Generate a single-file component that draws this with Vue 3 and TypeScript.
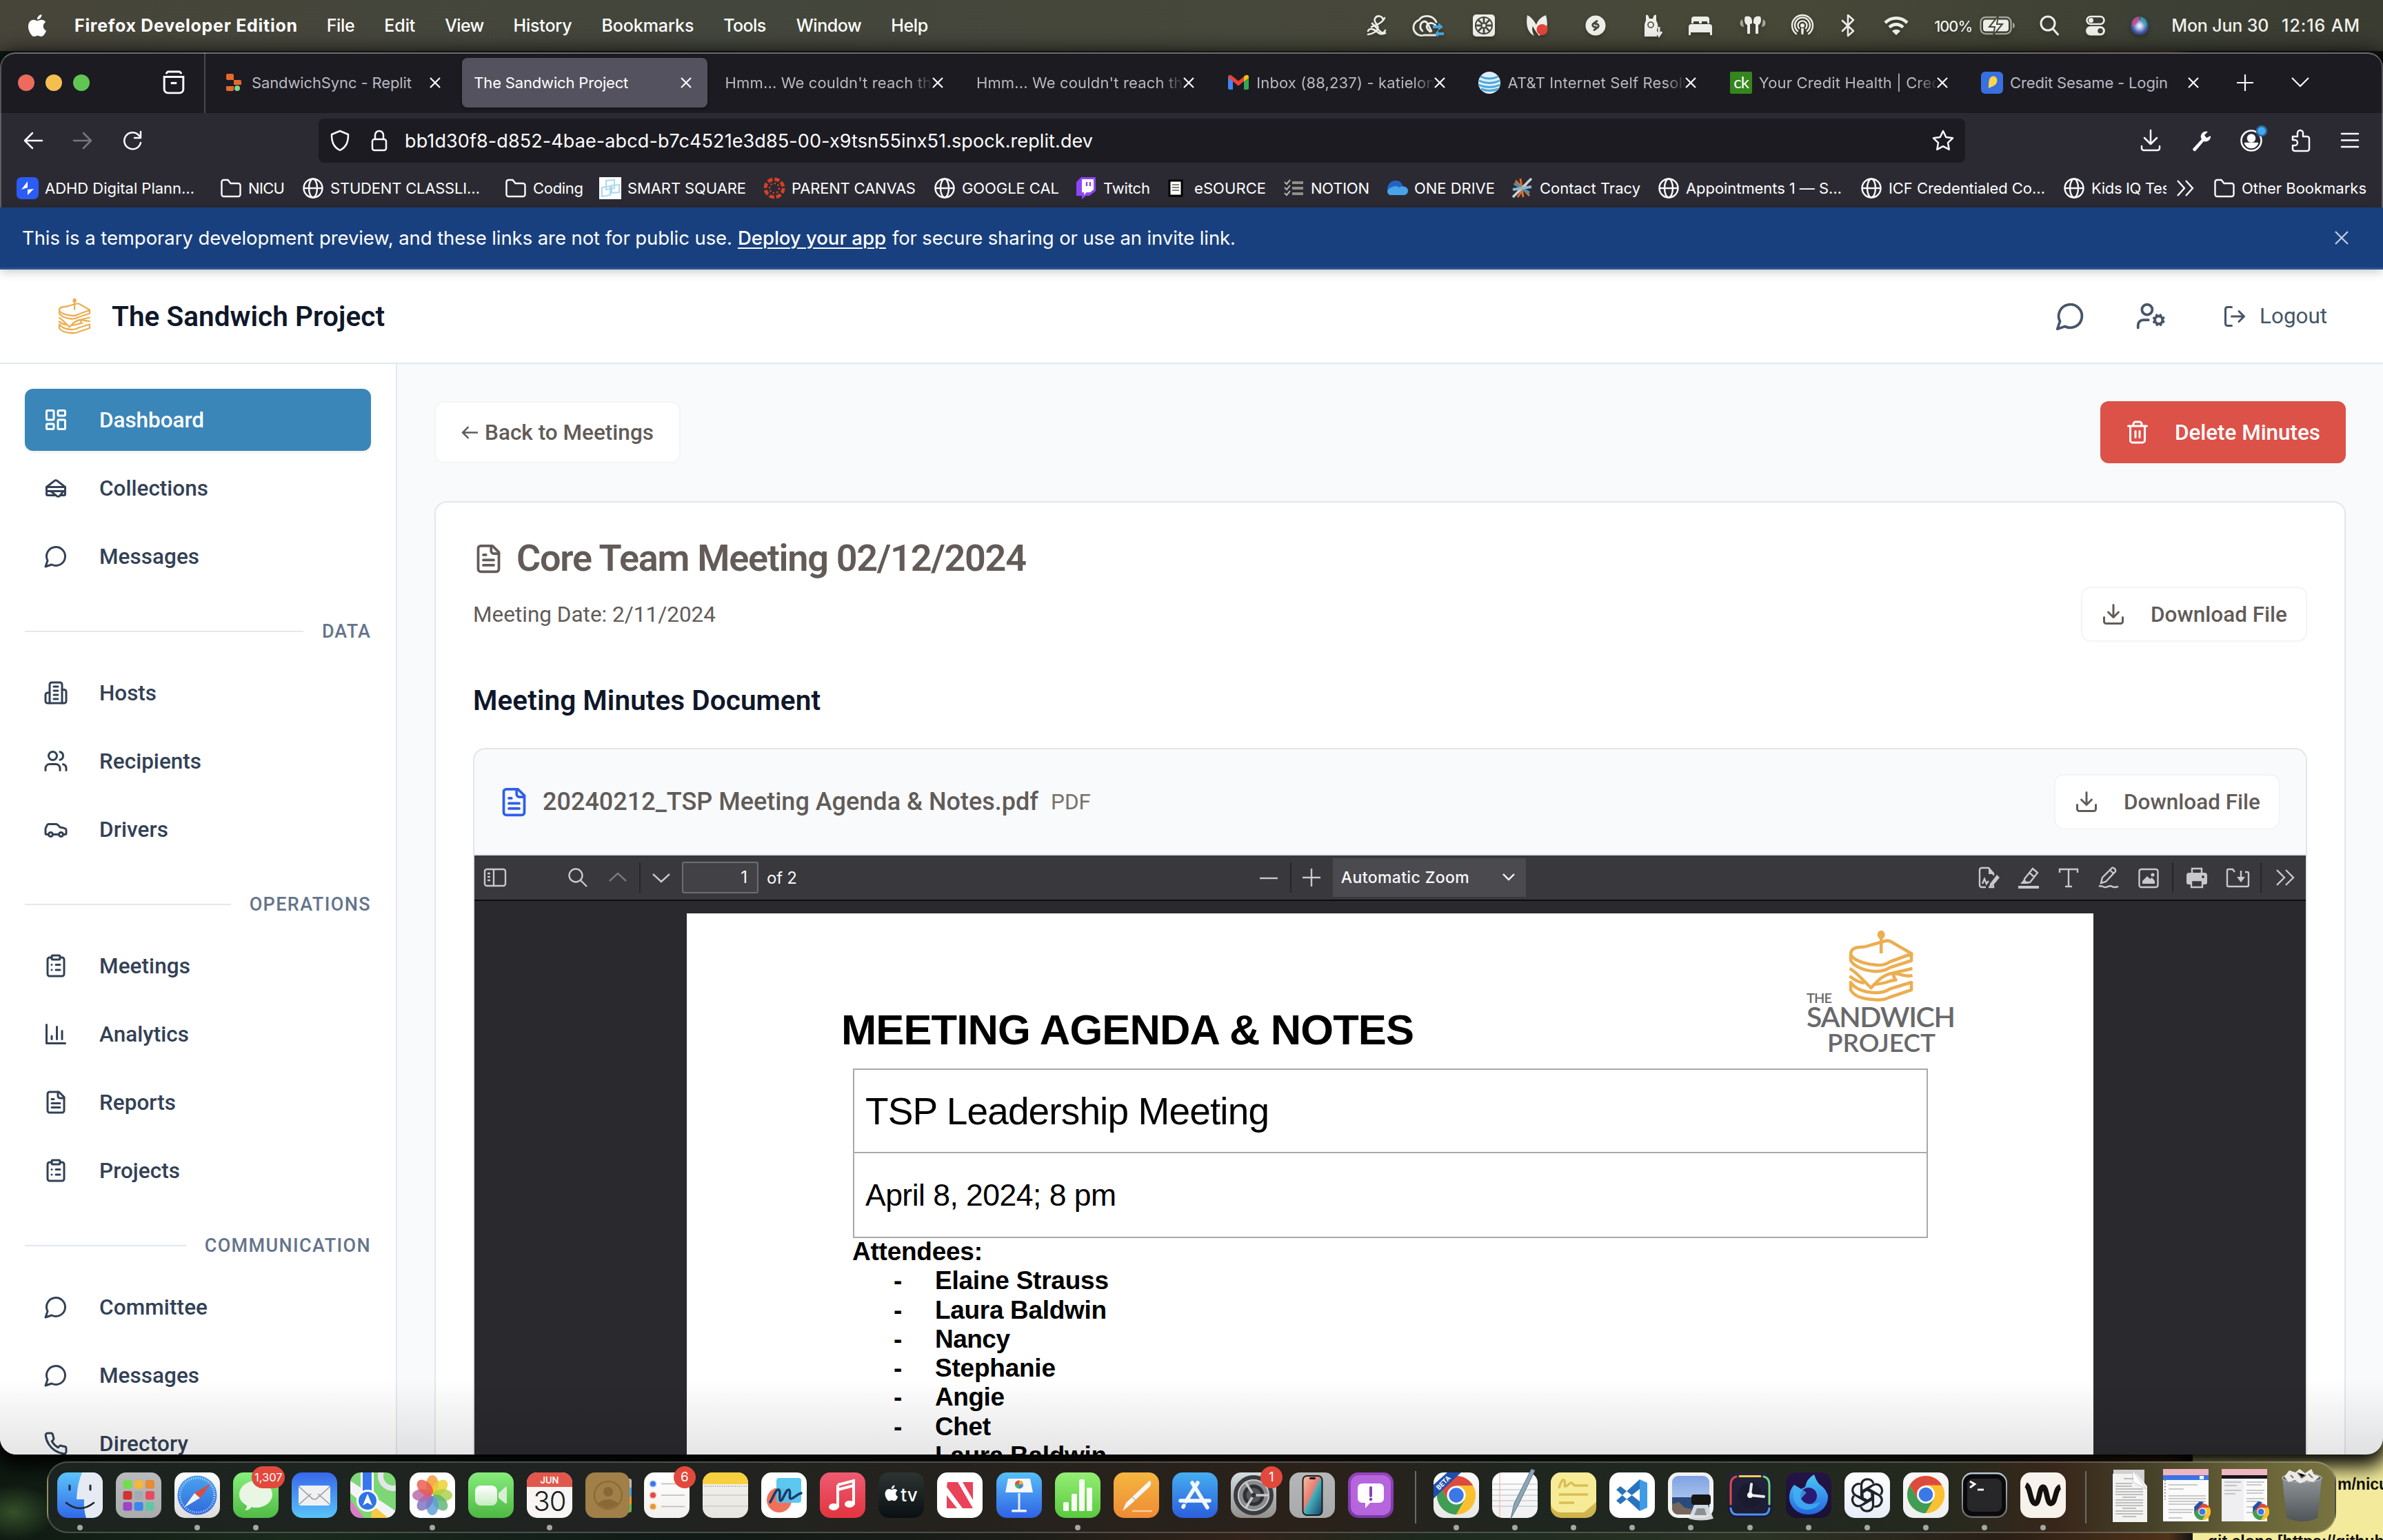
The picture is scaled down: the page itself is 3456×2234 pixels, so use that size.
<script setup lang="ts">
import type { DirectiveBinding } from 'vue'

/* Tracks a label out (or in) so that it fills the given width. */
const vFit = {
  mounted(el: HTMLElement, binding: DirectiveBinding<number | undefined>) {
    const length = (el.textContent ?? '').trim().length
    if (!binding.value || length < 2) return
    const natural = el.getBoundingClientRect().width
    el.style.letterSpacing = `${(binding.value - natural) / (length - 1)}px`
  },
}

/* Stroke icons on a 24 grid */
const line: Record<string, string> = {
  dashboard: '<rect x="3" y="3" width="7" height="9" rx="1"/><rect x="14" y="3" width="7" height="5" rx="1"/><rect x="14" y="12" width="7" height="9" rx="1"/><rect x="3" y="16" width="7" height="5" rx="1"/>',
  sandwich: '<path d="M3 11v3a1 1 0 0 0 1 1h16a1 1 0 0 0 1-1v-3"/><path d="M12 19H4a1 1 0 0 1-1-1v-2a1 1 0 0 1 1-1h16a1 1 0 0 1 1 1v2a1 1 0 0 1-1 1h-3.83"/><path d="m3 11 7.77-6.04a2 2 0 0 1 2.46 0L21 11H3Z"/><path d="M12.97 19.77 7 15h12.5l-3.75 4.5a2 2 0 0 1-2.78.27Z"/>',
  message: '<path d="M7.9 20A9 9 0 1 0 4 16.1L2 22Z"/>',
  building: '<path d="M6 22V4a2 2 0 0 1 2-2h8a2 2 0 0 1 2 2v18Z"/><path d="M6 12H4a2 2 0 0 0-2 2v6a2 2 0 0 0 2 2h2M18 9h2a2 2 0 0 1 2 2v9a2 2 0 0 1-2 2h-2M10 6h4M10 10h4M10 14h4M10 18h4"/>',
  users: '<path d="M16 21v-2a4 4 0 0 0-4-4H6a4 4 0 0 0-4 4v2"/><circle cx="9" cy="7" r="4"/><path d="M22 21v-2a4 4 0 0 0-3-3.87M16 3.13a4 4 0 0 1 0 7.75"/>',
  car: '<path d="M19 17h2c.6 0 1-.4 1-1v-3c0-.9-.7-1.7-1.5-1.9C18.7 10.6 16 10 16 10s-1.3-1.4-2.2-2.3c-.5-.4-1.1-.7-1.8-.7H5c-.6 0-1.1.4-1.4.9l-1.4 2.9A3.7 3.7 0 0 0 2 12v4c0 .6.4 1 1 1h2"/><circle cx="7" cy="17" r="2"/><path d="M9 17h6"/><circle cx="17" cy="17" r="2"/>',
  clipboard: '<rect x="8" y="2" width="8" height="4" rx="1"/><path d="M16 4h2a2 2 0 0 1 2 2v14a2 2 0 0 1-2 2H6a2 2 0 0 1-2-2V6a2 2 0 0 1 2-2h2M12 11h4M12 16h4M8 11h.01M8 16h.01"/>',
  chart: '<path d="M3 3v18h18M18 17V9M13 17V5M8 17v-3"/>',
  file: '<path d="M15 2H6a2 2 0 0 0-2 2v16a2 2 0 0 0 2 2h12a2 2 0 0 0 2-2V7Z"/><path d="M14 2v4a2 2 0 0 0 2 2h4M10 9H8M16 13H8M16 17H8"/>',
  phone: '<path d="M22 16.92v3a2 2 0 0 1-2.18 2 19.79 19.79 0 0 1-8.63-3.07 19.5 19.5 0 0 1-6-6 19.79 19.79 0 0 1-3.07-8.67A2 2 0 0 1 4.11 2h3a2 2 0 0 1 2 1.72 12.84 12.84 0 0 0 .7 2.81 2 2 0 0 1-.45 2.11L8.09 9.91a16 16 0 0 0 6 6l1.27-1.27a2 2 0 0 1 2.11-.45 12.84 12.84 0 0 0 2.81.7A2 2 0 0 1 22 16.92z"/>',
  trash: '<path d="M3 6h18M19 6v14c0 1-1 2-2 2H7c-1 0-2-1-2-2V6M8 6V4c0-1 1-2 2-2h4c1 0 2 1 2 2v2M10 11v6M14 11v6"/>',
  download: '<path d="M21 15v4a2 2 0 0 1-2 2H5a2 2 0 0 1-2-2v-4M7 10l5 5 5-5M12 15V3"/>',
  logout: '<path d="M9 21H5a2 2 0 0 1-2-2V5a2 2 0 0 1 2-2h4M16 17l5-5-5-5M21 12H9"/>',
  userCog: '<circle cx="18" cy="15" r="3"/><circle cx="9" cy="7" r="4"/><path d="M10 15H6a4 4 0 0 0-4 4v2M21.7 16.4l-.9-.3M15.2 13.9l-.9-.3M16.6 18.7l.3-.9M19.1 12.2l.3-.9M19.6 18.7l-.4-1M16.8 12.3l-.4-1M14.3 16.6l1-.4M20.7 13.8l1-.4"/>',
}

const sandwichLogo =
  '<g fill="none" stroke="#ecae52" stroke-width="4.6" stroke-linejoin="round"><path d="M46.7 5v28"/><ellipse cx="46.7" cy="6" rx="3.2" ry="4" fill="#ecae52"/><path d="M2.5 34C3 26 9 24.500 16 24c8 0 11-1 17-3.500l18-5c3-1.200 6-1.200 9 0l31 18-31 11.500c-8 5-14 6-23 4.500C20 48 5 42 2.500 34v9c4 9 20 15 34 16 9 .6 16-1 23-5.500l31-10V33.500"/><path d="M1 55c10 5 17 15 31 28 8-8 15-18 30-21l30-7M1 66c6 5 12 9 21 10M37 78c10-1 16-2 23-5l10-2M64 63l3 9M64 62c10 0 18 6 28 3"/><path d="M2.500 75c6 9 18 14 34 15 9 .6 16-1 23-5.500l31-9.500V86l-31 10.500c-8 4-14 5-23 3.500C20 99 8 96 2.500 86Z"/></g>'

const globe = '<g fill="none" stroke="#fbfbfe" stroke-width="2.400"><circle cx="16" cy="16" r="13.500"/><ellipse cx="16" cy="16" rx="6" ry="13.500"/><path d="M2.500 16h27"/></g>'
const folder = '<path d="M2.500 25V7a3 3 0 0 1 3-3h6l4 5h11a3 3 0 0 1 3 3v13a3 3 0 0 1-3 3h-21a3 3 0 0 1-3-3z" fill="none" stroke="#fbfbfe" stroke-width="2.400"/>'

const applePath = 'M12.152 6.896c-.948 0-2.415-1.078-3.960-1.040-2.040.027-3.910 1.183-4.961 3.014-2.117 3.675-.546 9.103 1.519 12.090 1.013 1.454 2.208 3.090 3.792 3.039 1.520-.065 2.090-.987 3.935-.987 1.831 0 2.350.987 3.960.948 1.637-.026 2.676-1.480 3.676-2.948 1.156-1.688 1.636-3.325 1.662-3.415-.039-.013-3.182-1.221-3.220-4.857-.026-3.040 2.480-4.494 2.597-4.559-1.429-2.090-3.623-2.324-4.390-2.376-2-.156-3.675 1.090-4.610 1.090zM15.530 3.830c.843-1.012 1.400-2.427 1.245-3.830-1.207.052-2.662.805-3.532 1.818-.780.896-1.454 2.338-1.273 3.714 1.338.104 2.715-.688 3.559-1.701'

const menus = [
  { label: 'File', w: 41, gap: 42 }, { label: 'Edit', w: 45, gap: 43 }, { label: 'View', w: 57, gap: 43 },
  { label: 'History', w: 85, gap: 43 }, { label: 'Bookmarks', w: 134, gap: 43 }, { label: 'Tools', w: 62, gap: 43 },
  { label: 'Window', w: 95, gap: 44 }, { label: 'Help', w: 54, gap: 43 },
]

interface Status { w: number; gap: number; svg?: string; text?: string }
const W = 'fill="#eeeee9"'
const S = 'fill="none" stroke="#eeeee9" stroke-linecap="round" stroke-linejoin="round"'
const status: Status[] = [
  { w: 30, gap: 0, svg: `<g ${S} stroke-width="2.600"><path d="M25 9C24 3 16 1 13 7c-3 6 7 9 4 15-2 4-8 7-14 8M8 19c8-3 16-6 19-13M3 25c2-5 9-3 13 1s8 4 12 2M9 14l12 12c3 3 6 1 7-2"/></g>` },
  { w: 44, gap: 41, svg: `<g ${S} stroke-width="2.800"><path d="M30 31H13A11 11 0 0 1 6 9c5-8 20-8 25 3"/><path d="M22 26c-4-3-7-8-3-11 4-3 9-1 11 2M11 25c-5-4-4-13 3-14 5 0 6 8 10 14"/></g><path d="M26 17h8v-4l7 6-7 5v-3h-8zM42 27h-8v-4l-5 6 5 5v-3h8z" fill="#43a5e2"/>` },
  { w: 32, gap: 40, svg: `<rect width="32" height="32" y="1" rx="5" ${W}/><circle cx="16" cy="17" r="12" fill="none" stroke="#45463a" stroke-width="2"/><circle cx="16" cy="17" r="3.500" fill="none" stroke="#45463a" stroke-width="2"/><path d="M16 5v8M16 21v8M4 17h8M20 17h8M7.500 8.500l6 6M18.500 19.500l6 6M24.500 8.500l-6 6M13.500 19.500l-6 6" stroke="#45463a" stroke-width="2.800"/>` },
  { w: 34, gap: 44, svg: `<path d="M3 2c6 3 10 8 13 14C18 10 22 5 30 2c2 8 3 16-1 24-3 4-7 4-9 6-6-8-7-10-9-14-2 5 0 10 2 14C2 26 1 14 3 2z" ${W}/><circle cx="24.500" cy="23" r="8" fill="#e0443a"/>` },
  { w: 30, gap: 53, svg: `<circle cx="15" cy="17" r="14.500" ${W}/><path d="M17 10.500l-5 3.500c-3 3 0 6 3 5M13 23.500l5-3.500c3-3 0-6-3-5" fill="none" stroke="#45463a" stroke-width="2.800" stroke-linecap="round"/>` },
  { w: 30, gap: 53, svg: `<path d="M3 33V17c0-3 1-5 2-7L5 2c3-2 4 2 5 5h5c1-3 2-7 5-5v8c3 5 3 9 1 13v10z" ${W}/><circle cx="12" cy="16" r="4" fill="none" stroke="#45463a" stroke-width="1.600"/><path d="M24 19v10M20 26l4 6 4-6" stroke="#eeeee9" stroke-width="3" fill="none"/>` },
  { w: 36, gap: 36, svg: `<path d="M5 14V8a4 4 0 0 1 4-4h18a4 4 0 0 1 4 4v6h-3v-3H20v3h-4v-3H8v3zM1 31V19a4 4 0 0 1 4-4h26a4 4 0 0 1 4 4v12h-3v-4H4v4z" ${W}/>` },
  { w: 40, gap: 38, svg: `<path d="M9 4c6-2 10 1 10 7v3l-3 1v14h-4V16C8 15 7 8 9 4zM31 4c-6-2-10 1-10 7v3l3 1v14h4V16c4-1 5-8 3-12z" ${W}/><path d="M5 8c-5 2-5 11 2 11zM35 8c5 2 5 11-2 11z" fill="#a5a59c"/>` },
  { w: 32, gap: 36, svg: `<g ${S} stroke-width="2.400"><path d="M7 29A15 15 0 1 1 25 29M9 25a11 11 0 1 1 14 0M11 21a6.500 6.500 0 1 1 10 0"/></g><circle cx="16" cy="17" r="3" ${W}/><path d="M14 21h4l-.6 9h-2.800z" ${W}/>` },
  { w: 24, gap: 38, svg: `<path d="M4 10l16 15-8 7V2l8 7L4 25" ${S} stroke-width="2.600"/>` },
  { w: 36, gap: 40, svg: `<g fill="none" stroke="#eeeee9" stroke-width="4.600"><path d="M2 13c9-9 23-9 32 0M8 19.500c6-5.500 14-5.500 20 0"/></g><path d="M12 25c3-3 9-3 12 0l-6 6z" ${W}/>` },
  { w: 56, gap: 37, text: '100%' },
  { w: 52, gap: 10, svg: `<rect x="1.500" y="5" width="44" height="24" rx="7" fill="none" stroke="#a3a399" stroke-width="2.400"/><rect x="5" y="8.500" width="37" height="17" rx="4" ${W}/><path d="M48 13c4 1 4 7 0 8z" fill="#a3a399"/><path d="M27 3L14 19h8l-2 12 13-16h-8z" ${W} stroke="#45463a" stroke-width="2"/>` },
  { w: 28, gap: 35, svg: `<g ${S} stroke-width="3"><circle cx="12" cy="14" r="10"/><path d="M19.500 22l7 8"/></g>` },
  { w: 28, gap: 39, svg: `<rect x="1.500" y="4" width="25" height="11" rx="5.500" fill="none" stroke="#eeeee9" stroke-width="2.600"/><circle cx="7.500" cy="9.500" r="3.500" ${W}/><rect y="18" width="28" height="13.500" rx="6.700" ${W}/><circle cx="21" cy="24.700" r="3.800" fill="#3f4136"/>` },
  { w: 28, gap: 36, svg: `<defs><radialGradient id="siri"><stop offset="0" stop-color="#fff"/><stop offset=".35" stop-color="#a9b9e8"/><stop offset=".7" stop-color="#4a5fb0"/><stop offset="1" stop-color="#2b3d52"/></radialGradient></defs><circle cx="14" cy="17.500" r="14" fill="url(#siri)"/><path d="M3 12a12 12 0 0 1 11-8c-1 8-5 12-11 15z" fill="#d84c7d" opacity=".8"/><path d="M15 4c8 2 11 8 9 15-4-2-8-7-9-15z" fill="#35b79a" opacity=".7"/>` },
]

interface Tab { title: string; icon?: string; w?: number; active?: boolean; faded?: boolean }
const tabs: Tab[] = [
  { title: 'SandwichSync - Replit', w: 235, icon: '<path d="M5 5a2 2 0 0 1 2-2h7a2 2 0 0 1 2 2v7H7a2 2 0 0 1-2-2zM16 12h9a2 2 0 0 1 2 2v5h-11zM5 21h11v5a2 2 0 0 1-2 2H7a2 2 0 0 1-2-2z" fill="#e8692b"/><circle cx="21" cy="24" r="4" fill="#7fd68c"/>' },
  { title: 'The Sandwich Project', w: 227, active: true },
  { title: "Hmm... We couldn't reach that site", faded: true },
  { title: "Hmm... We couldn't reach that site", faded: true },
  { title: 'Inbox (88,237) - katielong', faded: true, icon: '<path d="M1 7v17a2 2 0 0 0 2 2h5V13z" fill="#4285f4"/><path d="M31 7v17a2 2 0 0 1-2 2h-5V13z" fill="#34a853"/><path d="M1 8c0-3 3-4 5-2.500L16 13.500l10-8C28 4 31 5 31 8l-7 6-8 6.500L8 14z" fill="#ea4335"/><path d="M24 14V7l2-1.500C28 4 31 5 31 8v1z" fill="#fbbc04"/>' },
  { title: 'AT&T Internet Self Resolution', faded: true, icon: '<circle cx="16" cy="16" r="16" fill="#dceef8"/><path d="M3 7q13 6 26 0M1 13q15 7 30 0M0 19q16 7 32 0M4 25q12 5 25 0" stroke="#4ba6d8" stroke-width="3" fill="none"/>' },
  { title: 'Your Credit Health | Credit Karma', faded: true, icon: '<rect width="32" height="32" rx="2" fill="#34861d"/><text x="16" y="24" font-size="24" text-anchor="middle" fill="#fff" font-family="Lato" letter-spacing="-1">ck</text>' },
  { title: 'Credit Sesame - Login', w: 232, icon: '<rect width="32" height="32" rx="6" fill="#3a6fe0"/><path d="M14 8c5-4 11 0 9 7-1 5-6 6-12 9 0-6 0-13 3-16z" fill="#fbd64a"/>' },
]

const bookmarks = [
  { w: 295, t: 'ADHD Digital Plann…', tw: 217, icon: '<rect width="32" height="32" rx="7" fill="#2b5cf6"/><path d="M16 6v12l9-1-9 9V15l-9 3z" fill="#fff"/>' },
  { w: 119, t: 'NICU', tw: 53, icon: folder },
  { w: 294, t: 'STUDENT CLASSLI…', tw: 217, icon: globe },
  { w: 137, t: 'Coding', tw: 73, icon: folder },
  { w: 238, t: 'SMART SQUARE', tw: 172, icon: '<rect width="32" height="32" fill="#fff"/><g fill="none" stroke="#a9d9f2" stroke-width="2"><path d="M10 5l12-1v12l-12 2zM4 15l12-2v13L4 28zM18 12l11-1v11l-11 1z"/></g>' },
  { w: 247, t: 'PARENT CANVAS', tw: 180, icon: '<g fill="none" stroke="#d64027"><circle cx="16" cy="16" r="13" stroke-width="5" stroke-dasharray="7.200 3"/><circle cx="16" cy="16" r="7" stroke-width="2.400" stroke-dasharray="2.400 3"/></g>' },
  { w: 205, t: 'GOOGLE CAL', tw: 141, icon: globe },
  { w: 132, t: 'Twitch', tw: 68, icon: '<path d="M9 0h21v20l-9 7h-5l-6 5v-5H2V7z" fill="#8d45f7"/><path d="M10 3h17v15l-5 4h-5l-4 4v-4h-3z" fill="#fff"/><path d="M17 7v6M22 7v6" stroke="#8d45f7" stroke-width="2.400"/>' },
  { w: 169, t: 'eSOURCE', tw: 104, icon: '<rect x="5" y="5" width="18" height="22" fill="#fff" stroke="#000" stroke-width="3"/><path d="M9 11h10M9 15h10M9 19h10" stroke="#555" stroke-width="1.600"/>' },
  { w: 150, t: 'NOTION', tw: 85, icon: '<path d="M14 8h16M14 16h16M14 24h16" stroke="#8f8f88" stroke-width="4"/><path d="M3 7l3 3 5-6M3 15l3 3 5-6M3 23l3 3 5-6" stroke="#b5b5ab" stroke-width="2" fill="none"/>' },
  { w: 182, t: 'ONE DRIVE', tw: 117, icon: '<path d="M2 18C2 10 8 4 15 5c6 0 9 5 9 8 5 0 8 3 8 7 0 3-3 6-6 6H8c-4 0-6-4-6-8z" fill="#2463c4"/><path d="M10 14c3-2 7-1 9 1 5-3 13-1 13 5 0 3-3 6-6 6H7c-3 0-5-3-5-5 1-4 4-6 8-7z" fill="#49a3e8"/>' },
  { w: 212, t: 'Contact Tracy', tw: 146, icon: '<path d="M13 2l4 27M25 5L9 29M6 5l20 22" stroke="#d9702f" stroke-width="3"/><path d="M2 29L29 2" stroke="#c9d3db" stroke-width="3.500"/><path d="M4 9l22 14" stroke="#4f8fae" stroke-width="4"/><path d="M2 18l27-4" stroke="#8fb4c6" stroke-width="4"/>' },
  { w: 294, t: 'Appointments 1 — S…', tw: 226, icon: globe },
  { w: 294, t: 'ICF Credentialed Co…', tw: 227, icon: globe },
  { w: 150, t: 'Kids IQ Test', tw: 121, icon: globe },
]

interface NavItem { label: string; icon: string; w: number; active?: boolean }
interface NavGroup { heading?: string; w?: number; items: NavItem[] }
const nav: NavGroup[] = [
  { items: [
    { label: 'Dashboard', icon: 'dashboard', w: 152, active: true },
    { label: 'Collections', icon: 'sandwich', w: 158 },
    { label: 'Messages', icon: 'message', w: 145 },
  ] },
  { heading: 'DATA', w: 70, items: [
    { label: 'Hosts', icon: 'building', w: 83 },
    { label: 'Recipients', icon: 'users', w: 148 },
    { label: 'Drivers', icon: 'car', w: 100 },
  ] },
  { heading: 'OPERATIONS', w: 175, items: [
    { label: 'Meetings', icon: 'clipboard', w: 132 },
    { label: 'Analytics', icon: 'chart', w: 130 },
    { label: 'Reports', icon: 'file', w: 111 },
    { label: 'Projects', icon: 'clipboard', w: 117 },
  ] },
  { heading: 'COMMUNICATION', w: 240, items: [
    { label: 'Committee', icon: 'message', w: 157 },
    { label: 'Messages', icon: 'message', w: 145 },
    { label: 'Directory', icon: 'phone', w: 129 },
  ] },
]

/* PDF toolbar: cell width, glyph (null draws a separator) */
const pdfTools: { w: number; svg: string | null }[] = [
  { w: 58, svg: '<path d="M12 30H6a3 3 0 0 1-3-3V5a3 3 0 0 1 3-3h10l7 8v3M16 30h7v-3" class="s"/><path d="M16 2l8 9h-8zM18 25l10-13 4 4-10 12-5 2z" class="f"/><path d="M7 25l3-7 3 7 3-4" class="s"/>' },
  { w: 58, svg: '<path d="M10 18L22 3l7 6-11 14H11zM17 9l7 6" class="s"/><path d="M9 19l7 6H4zM1 28h30v4H1z" class="f"/>' },
  { w: 58, svg: '<path d="M3 9V4h26v5M16 4v25M11 29h10" class="s"/>' },
  { w: 58, svg: '<path d="M5 24l2-8L21 2c2-1 6 2 5 5L12 22zM18 5l5 5M2 29c4-3 6 2 10 1s6-3 9-1 6 1 9 0" class="s"/>' },
  { w: 58, svg: '<rect x="2.500" y="4" width="27" height="26" rx="3" class="s"/><path d="M7 25v-4l7-7 4 4 3-2 4 5v4z" class="f"/><circle cx="22" cy="12" r="2.600" class="f"/>' },
  { w: 12, svg: null },
  { w: 58, svg: '<path d="M9 11V3h14v8" class="s"/><path d="M5 9h22a4 4 0 0 1 4 4v10a3 3 0 0 1-3 3h-3v-5H7v5H4a3 3 0 0 1-3-3V13a4 4 0 0 1 4-4z" class="f"/><path d="M8 20h16v10H8z" class="s"/><circle cx="25" cy="15" r="2" fill="#38383d"/>' },
  { w: 59, svg: '<path d="M12 8L9 4H3a2 2 0 0 0-2 2v21a2 2 0 0 0 2 2h27a2 2 0 0 0 2-2V10a2 2 0 0 0-2-2h-3M21 6v12" class="s"/><path d="M15 15h12l-6 8z" class="f"/>' },
  { w: 10, svg: null },
  { w: 60, svg: '<path d="M4 5l11 11L4 27M17 5l11 11-11 11" class="s"/>' },
]

const attendees = [
  { n: 'Elaine Strauss', w: 252 }, { n: 'Laura Baldwin', w: 249 }, { n: 'Nancy', w: 109 }, { n: 'Stephanie', w: 175 },
  { n: 'Angie', w: 101 }, { n: 'Chet', w: 81 }, { n: 'Laura Baldwin', w: 249 },
]

const grad = (id: string, a: string, b: string) =>
  `<defs><linearGradient id="${id}" x2="0" y2="1"><stop stop-color="${a}"/><stop offset="1" stop-color="${b}"/></linearGradient></defs>`
const tile = (id: string, a: string, b: string = a) => `${grad(id, a, b)}<rect width="66" height="66" rx="15" fill="url(#${id})"/>`
const chrome = (cx: number, cy: number, r: number) =>
  `<g transform="translate(${cx} ${cy}) scale(${r / 30})"><circle r="30" fill="#fbc02f"/><path d="M-26-15A30 30 0 0 1 26-15H0L-13 7.500z" fill="#dd4b3e"/><path d="M-26-15A30 30 0 0 0 0 30L13 7.500-13 7.500z" fill="#3f9d55"/><path d="M0 30L13 7.500V-4L26-15A30 30 0 0 1 0 30z" fill="#fbc02f"/><circle r="14.500" fill="#fff"/><circle r="11.500" fill="#3b78e7"/></g>`
const petals = ['#f39a2d', '#e9d22c', '#a9cf45', '#5fb574', '#5b9fd8', '#7c6fc0', '#b765a9', '#ea5a4b']

interface DockItem { svg: string; gap?: number; w?: number; dot?: boolean; badge?: string; sep?: boolean }
const dock: DockItem[] = [
  { dot: true, svg: `${tile('d1', '#5cc4fb', '#3168e8')}<path d="M36 0h15a15 15 0 0 1 15 15v36a15 15 0 0 1-15 15h-9q-4-12-3-27H28Q29 16 36 0z" fill="#e6ebf3"/><path d="M18 19v6M48 19v6" stroke="#1d2b3d" stroke-width="3" stroke-linecap="round"/><path d="M13 44q20 16 40 0" fill="none" stroke="#1c2733" stroke-width="2.600" stroke-linecap="round"/>` },
  { svg: `${tile('d2', '#b9bbbc', '#a9abac')}${['#73dd4d', '#f2b73b', '#e88b31', '#cf3430', '#a4abb0', '#e84a5e', '#9b45c9', '#3b86ef', '#5fc8a4'].map((c, i) => `<rect x="${10.500 + (i % 3) * 16.200}" y="${11 + Math.floor(i / 3) * 16}" width="13" height="12.500" rx="3" fill="${c}"/>`).join('')}` },
  { dot: true, svg: `${tile('d3', '#ffffff', '#dcdcdc')}${grad('d3b', '#4aa5ee', '#2f68dc')}<circle cx="33" cy="33" r="28.500" fill="url(#d3b)"/><circle cx="33" cy="33" r="25" fill="none" stroke="#cfe4fa" stroke-width="3" stroke-dasharray="1 2.270"/><path d="M53 16L29 30l8 7z" fill="#e04a3d"/><path d="M14 51l15-21 8 7z" fill="#f2f2f2"/>` },
  { dot: true, badge: '1,307', svg: `${tile('d4', '#87f07c', '#4fbb45')}<path d="M33 12c13 0 24 9 24 20S46 51 33 51c-2 0-4 0-6-1-2 3-6 5-10 5 2-2 3-4 3-7-7-4-11-9-11-16 0-11 11-20 24-20z" fill="#e8f6e3"/>` },
  { svg: `${tile('d5', '#3768ea', '#59c4fa')}<rect x="10" y="19" width="46" height="29" rx="4" fill="#f0f1f3"/><path d="M11 46l17-15M55 46L38 31M11 21l19 17q3 2 6 0l19-17" fill="none" stroke="#9a9ca0" stroke-width="1.600"/>` },
  { svg: `<defs><clipPath id="mp"><rect width="66" height="66" rx="15"/></clipPath></defs><g clip-path="url(#mp)"><rect width="66" height="66" fill="#7ed775"/><path d="M0 12l66 44v10H44L0 30z" fill="#f3f4f8"/><path d="M0 40l20 26H0z" fill="#dc7cc4"/><path d="M33 48l22 18H30z" fill="#f6c944"/><circle cx="62" cy="5" r="18" fill="none" stroke="#e4e5ea" stroke-width="8"/><rect x="15" width="19" height="40" fill="#fff"/><rect x="18" width="13" height="40" fill="#3a76ee"/></g><circle cx="25" cy="41" r="16" fill="#fff"/><circle cx="25" cy="41" r="13" fill="#2f73e6"/><path d="M25 31l7 17-7-4-7 4z" fill="#fff"/>` },
  { dot: true, svg: `${tile('d7', '#ffffff')}${petals.map((c, i) => `<ellipse cx="33" cy="18" rx="9" ry="14" fill="${c}" opacity=".82" transform="rotate(${i * 45} 33 33)"/>`).join('')}` },
  { svg: `${tile('d8', '#86ec7b', '#4db843')}${grad('d8b', '#ffffff', '#c8ecc2')}<rect x="10" y="19" width="32" height="29" rx="8" fill="url(#d8b)"/><path d="M44 30l10-9q2-1 2 1v22q0 2-2 1l-10-8z" fill="#d6efd2"/>` },
  { dot: true, svg: `<defs><clipPath id="cal"><rect width="66" height="66" rx="15"/></clipPath></defs><g clip-path="url(#cal)"><rect width="66" height="66" fill="#f7f6f5"/><rect width="66" height="21" fill="#e2574c"/></g><text x="33" y="16" text-anchor="middle" font-family="Inter" font-weight="600" font-size="13" fill="#fff">JUN</text><text x="33" y="56" text-anchor="middle" font-family="Inter" font-weight="300" font-size="40" letter-spacing="-1" fill="#1c1c1c">30</text>` },
  { svg: `<path d="M58 9h6a3 3 0 0 1 3 3v10h-9z" fill="#bdbdbd"/><path d="M58 22h9v13h-9z" fill="#4aa3e0"/><path d="M58 35h9v11h-9z" fill="#f0942d"/><path d="M58 46h9v9a3 3 0 0 1-3 3h-6z" fill="#59c04e"/><rect width="64" height="66" rx="14" fill="#a17f49"/><circle cx="33" cy="33" r="20" fill="none" stroke="#886836" stroke-width="2"/><circle cx="33" cy="28" r="7" fill="#886836"/><path d="M18 45q15-12 30 0-15 13-30 0z" fill="#886836"/>` },
  { badge: '6', svg: `${tile('d11', '#ffffff', '#f1f0ee')}<g stroke="#b9b9b9" stroke-width="1.600"><path d="M25 16.500h34M25 33h34M25 49.500h34"/></g><circle cx="13" cy="16.500" r="4.600" fill="#3b76ec" stroke="#b8cdf7" stroke-width="1.500"/><circle cx="13" cy="33" r="4.600" fill="#e04a3c" stroke="#f3b8b2" stroke-width="1.500"/><circle cx="13" cy="49.500" r="4.600" fill="#e8962f" stroke="#f5d5a9" stroke-width="1.500"/>` },
  { svg: `${tile('d12', '#f4f3f1', '#e7e5df')}<path d="M0 17V15A15 15 0 0 1 15 0h36a15 15 0 0 1 15 15v2z" fill="#f8cf3e"/><path d="M0 33h66M0 49h66" stroke="#cfcdc8" stroke-width="1.400"/><path d="M2 20h62" stroke="#aaa" stroke-width="2" stroke-dasharray="1.200 2"/>` },
  { svg: `${tile('d13', '#ffffff')}<circle cx="26" cy="40" r="18" fill="#f0715a"/><rect x="22" y="8" width="36" height="36" rx="4" fill="#4fc3ee" opacity=".92"/><path d="M13 43c5-8 8-19 12-18s0 15 3 16 8-17 12-16-1 13 3 13 8-6 15-8" fill="none" stroke="#163c6b" stroke-width="3.600" stroke-linecap="round"/>` },
  { svg: `${tile('d14', '#ee5b71', '#e2343f')}<path d="M26 18l23-6v35M26 18v33M26 25l23-6" stroke="#fff" stroke-width="4" fill="none"/><ellipse cx="20" cy="50" rx="7" ry="5" fill="#fff"/><ellipse cx="43" cy="46" rx="7" ry="5" fill="#fff"/>` },
  { svg: `${tile('d15', '#2c3532', '#0a1013')}<path transform="translate(7.500 18.500) scale(.95)" d="${applePath}" fill="#fff"/><text x="44.500" y="42" text-anchor="middle" font-family="Inter" font-weight="500" font-size="26" fill="#fff">tv</text>` },
  { svg: `${tile('d16', '#ffffff')}<path d="M15 14h15l22 38H37L14 21zM37 14h15v26zM14 33l15 19H14z" fill="#ea4259"/>` },
  { svg: `${tile('d17', '#57bff7', '#2f62e6')}<path d="M17 9h32l4 20H13z" fill="#f5f7fa"/><path d="M33 30v25" stroke="#e8eef7" stroke-width="3"/><rect x="22" y="54" width="22" height="3.500" rx="1.500" fill="#f0f3f8"/><circle cx="33" cy="17.500" r="6" fill="#45b75c"/><path d="M33 17.500v-6a6 6 0 0 1 6 6z" fill="#f3b13a"/><path d="M33 17.500h-6a6 6 0 0 1 6-6z" fill="#e34b53"/><path d="M33 17.500h6a6 6 0 0 1-6 6z" fill="#3f83ea"/>` },
  { dot: true, svg: `${tile('d18', '#93ee74', '#5ac93e')}<g fill="#f6fbf3"><rect x="12" y="43" width="8" height="13" rx="1.500"/><rect x="24" y="31" width="8" height="25" rx="1.500"/><rect x="35" y="10" width="8" height="46" rx="1.500"/><rect x="46" y="22" width="8" height="34" rx="1.500"/></g>` },
  { svg: `${tile('d19', '#f5b63f', '#ee8b36')}<path d="M52 12q4 1 1 8L24 47l-11 9 5-12z" fill="#f8f6f3"/><path d="M27 56h29" stroke="#f9cf9b" stroke-width="2.400"/><path d="M26 35l7 6" stroke="#b9b3ab" stroke-width="1.500"/>` },
  { svg: `${tile('d20', '#45aef0', '#2b5edc')}<g stroke="#f4f8fd" stroke-width="5.500" stroke-linecap="round"><path d="M37 15L20 42M29 15l22 36M12 41h42M17 48l-1 2"/></g>` },
  { badge: '1', svg: `${tile('d21', '#d3dde0', '#918f8c')}<circle cx="33" cy="33" r="26" fill="none" stroke="#3a3c3f" stroke-width="6"/><circle cx="33" cy="33" r="22" fill="#8a8b8c" stroke="#c5c6c7" stroke-width="2"/><circle cx="33" cy="33" r="13" fill="#55575a" stroke="#2e3033" stroke-width="5"/><path d="M33 33h21M33 33L22 15M33 33L22 51" stroke="#c9cacb" stroke-width="3.400"/><circle cx="33" cy="33" r="3.500" fill="#333"/>` },
  { svg: `${tile('d22', '#b5b7b8', '#a8a9aa')}<defs><linearGradient id="d22b" x2="1" y2="1"><stop stop-color="#f3c1a0"/><stop offset=".45" stop-color="#e87c72"/><stop offset=".5" stop-color="#45b4bd"/><stop offset="1" stop-color="#173e66"/></linearGradient></defs><rect x="19.500" y="5" width="28" height="57" rx="6" fill="url(#d22b)" stroke="#1b1b1d" stroke-width="2"/><rect x="29" y="7" width="9" height="3" rx="1.500" fill="#111"/>` },
  { svg: `${tile('d23', '#9543bd', '#7b38a6')}<rect x="4" y="4" width="58" height="58" rx="12" fill="#b665dd"/><path d="M21 16h24q7 0 7 7v14q0 7-7 7H32l-7 8v-8h-4q-7 0-7-7V23q0-7 7-7z" fill="#fff"/><path d="M33 22v12" stroke="#8b3fb4" stroke-width="4" stroke-linecap="round"/><circle cx="33" cy="39" r="2.300" fill="#8b3fb4"/>` },
  { sep: true, gap: 31, w: 2, svg: '' },
  { dot: true, gap: 25, svg: `${tile('d24', '#fafafa', '#e8e8e8')}${chrome(33, 33, 28)}<defs><clipPath id="cb"><rect width="66" height="66" rx="15"/></clipPath></defs><g clip-path="url(#cb)"><path d="M20 0h20L0 38V18z" fill="#1f4fb0"/></g><text transform="translate(8 26) rotate(-45)" font-family="Roboto" font-weight="700" font-size="10" fill="#fff">BETA</text>` },
  { dot: true, svg: `${tile('d25', '#ffffff', '#f0f0f0')}<path d="M0 17h66M0 25h66M0 33h66M0 41h66M0 49h66" stroke="#b3bac2" stroke-width="1.200"/><path d="M11 1v64" stroke="#f0b8b0" stroke-width="1.200"/><path d="M57-5l5 2-24 50-11 20 5-22z" fill="#8ca6b8" stroke="#5b7080" stroke-width="1"/>` },
  { dot: true, svg: `${tile('d26', '#e3cb62', '#cdb24b')}<path d="M0 15A15 15 0 0 1 15 0h36a15 15 0 0 1 15 15v28L48 58H15A15 15 0 0 1 0 45z" fill="#f8eb97"/><path d="M12 23c2-9 6-15 8-11s-2 9 2 8 5-6 8-5 2 4 6 4h18M12 32h42M12 44h22" fill="none" stroke="#d8bf55" stroke-width="3.400"/>` },
  { dot: true, svg: `${tile('d27', '#ffffff')}<path d="M44 10l11 5v36l-11 5z" fill="#3f9be8"/><path d="M44 10v14L16 46l-6-5zM44 56V42L16 20l-6 5z" fill="#2873bd"/>` },
  { dot: true, svg: `${tile('d28', '#f2f2f0')}${grad('d28b', '#7fa3e3', '#c4d7f1')}<rect x="6" y="5" width="54" height="56" rx="9" fill="url(#d28b)"/><path d="M6 36h54v25H15a9 9 0 0 1-9-9z" fill="#2b4a7a"/><path d="M6 46l10-3 8 8 10 2v8H15a9 9 0 0 1-9-9z" fill="#75675b"/><rect x="34" y="32" width="28" height="15" rx="4" fill="#161616"/><path d="M38 47h20l8 20q-18 5-36 0z" fill="#dfe3e6" opacity=".93"/><path d="M42 52h11l3 10H38z" fill="#8c9094"/>` },
  { dot: true, svg: `${tile('d29', '#23233f', '#1b1b33')}<circle cx="33" cy="33" r="18" fill="#1b1b30"/><g fill="none" stroke-width="3" stroke-linecap="round"><path d="M18 5.500h30" stroke="#f0cf48"/><path d="M5 46V18q0-10 8-12" stroke="#dd4a48"/><path d="M61 46V18q0-10-8-12" stroke="#74dc72"/><path d="M5 52q1 9 9 9h38q8 0 9-9" stroke="#4d94ef"/></g><path d="M33 33l2-16M33 33l20 2" stroke="#e8e8ee" stroke-width="4" stroke-linecap="round"/><circle cx="33" cy="33" r="4" fill="#fff"/>` },
  { svg: `${tile('d30', '#251447', '#1a1035')}${grad('d30b', '#4cc8f6', '#2366e0')}<path d="M12 18l10 6 6-3q2-12 13-18 4 12 10 16t10 14C62 50 49 61 33 61S4 50 5 34q1-10 7-16z" fill="url(#d30b)"/><circle cx="33" cy="34" r="12" fill="#2a1a73"/><path d="M12 18l10 6 8 5-8 9q8 13 28 5-8 14-26 10Q6 46 12 18z" fill="#43b2f3" opacity=".75"/>`, dot: true },
  { dot: true, svg: `${tile('d31', '#ffffff', '#e6edf8')}<g fill="none" stroke="#1f2329" stroke-width="3.200" stroke-linejoin="round">${[0, 60, 120, 180, 240, 300].map((a) => `<path transform="rotate(${a} 33 33)" d="M24.500 36V18.500c0-6 5-9.500 10.500-8.500 3.500.6 6 3 7 6M25 30l9-6 13 7.500"/>`).join('')}</g>` },
  { dot: true, svg: `${tile('d32', '#f8f8f8', '#efefef')}${chrome(33, 32, 27)}` },
  { dot: true, svg: `${tile('d33', '#b9cbd6', '#6d6c6c')}<rect x="2" y="2.500" width="62" height="61" rx="13" fill="#0a0a0a"/><rect x="8" y="9" width="50" height="48" rx="8" fill="#27272a"/><path d="M12 13l7 4-7 5" fill="none" stroke="#fff" stroke-width="2.800"/><path d="M23 25h9" stroke="#fff" stroke-width="2.800"/>` },
  { dot: true, svg: `${tile('d34', '#f7f3ec')}<path d="M8 18c7 3 6 25 13 27s6-24 12-24 5 26 12 24 5-22 13-24" fill="none" stroke="#14110f" stroke-width="7.500"/>` },
  { sep: true, gap: 28, w: 2, svg: '' },
  { gap: 34, w: 56, svg: `<path d="M5-4h45v74H5z" fill="#cfd0d0"/><path d="M3 2h36l15 18v52H3z" fill="#f3f3f2"/><path d="M33-3v17l20 10z" fill="#fcfcfc" stroke="#c8c8c8"/><g stroke="#8a8a8a" stroke-width="1.100"><path d="M20 9h14M8 16h24M8 20h24M8 24h40M8 28h40M8 32h40M18 36h20M8 40h40M8 44h40M8 48h40M18 52h20M8 56h40M8 60h40M18 64h20"/></g><path d="M3 2v70" stroke="#333" stroke-width="2"/>` },
  { gap: 21, svg: `<rect y="-5" width="66" height="76" fill="#fafafa"/><rect y="-5" width="66" height="9" fill="#efb6c2"/><rect y="4" width="66" height="7" fill="#3b74e4"/><rect x="53" y="5" width="6" height="5" fill="#fff"/><path d="M3 11v28" stroke="#557" stroke-width="1.500" stroke-dasharray="1.500 3"/><g stroke="#999" stroke-width="1.200"><path d="M8 18h42M8 24h22M8 34h54M8 38h54M8 42h54M8 46h50M8 54h36M8 58h34M8 66h20"/></g>${chrome(57, 57, 12)}<path d="M45 50l8-8 6 1-13 14z" fill="#1f4fb0"/>` },
  { gap: 19, svg: `<rect y="-5" width="66" height="76" fill="#fafafa"/><rect y="-5" width="66" height="9" fill="#efb6c2"/><rect y="4" width="66" height="5" fill="#16161c"/><rect y="9" width="32" height="62" fill="#efeff1"/><g stroke="#999" stroke-width="1.200"><path d="M4 14h24M4 19h18M4 26h24M4 31h16M36 14h26M36 18h22M36 26h26M36 30h24M36 38h26M36 42h20M36 50h22M36 58h12"/></g>${chrome(57, 57, 12)}<path d="M45 50l8-8 6 1-13 14z" fill="#1f4fb0"/>` },
  { gap: 20, w: 62, svg: `${grad('tr', '#8f9498', '#4f5458')}<path d="M2 8l6 58q23 10 45 0l6-58z" fill="url(#tr)"/><ellipse cx="30.500" cy="8" rx="28.500" ry="6" fill="#5b6064" stroke="#a2a7aa" stroke-width="2"/><path d="M5 6l7-9 9 3 6-5 8 6 9-6 4 8 8 3-9 8-10-2-9 4-8-5-9 3z" fill="#eceae6"/><path d="M24 0l6 8 6-4M40 2l6 6M14 4l4 4" stroke="#7a706a" stroke-width="2"/>` },
]
</script>

<template>
  <div class="screen">
    <header class="menubar">
      <svg class="apple" viewBox="0 0 24 24"><path :d="applePath" /></svg>
      <span v-fit="323" class="app-name fit">Firefox Developer Edition</span>
      <span v-for="m in menus" :key="m.label" v-fit="m.w" class="fit" :style="{ marginLeft: m.gap + 'px' }">{{ m.label }}</span>
      <div class="status">
        <div v-for="(s, i) in status" :key="i" class="status-item" :style="{ width: s.w + 'px', marginLeft: s.gap + 'px' }">
          <span v-if="s.text" v-fit="s.w" class="fit battery-text">{{ s.text }}</span>
          <svg v-else :width="s.w" height="34" :viewBox="`0 0 ${s.w} 34`" v-html="s.svg" />
        </div>
        <span v-fit="141" class="fit date">Mon Jun 30</span>
        <span v-fit="113" class="fit time">12:16 AM</span>
      </div>
    </header>

    <div class="desktop">
      <div class="sticky">
        <span class="sticky-line one">m/nicu</span>
        <span class="sticky-line two">git clone [https://github</span>
      </div>

      <section class="window">
        <div class="tabstrip">
          <div class="window-controls">
            <i class="light red" /><i class="light yellow" /><i class="light green" />
            <svg class="view" viewBox="0 0 32 32"><path d="M6 4a3 3 0 0 1 3-3h14a3 3 0 0 1 3 3M3 8h26v17a5 5 0 0 1-5 5H8a5 5 0 0 1-5-5z" /><rect x="12" y="15" width="8" height="3" /></svg>
          </div>
          <div v-for="(t, i) in tabs" :key="i" class="tab" :class="{ active: t.active }">
            <svg v-if="t.icon" class="favicon" viewBox="0 0 32 32" v-html="t.icon" />
            <div class="tab-title" :class="{ faded: t.faded }"><span v-fit="t.w" class="fit">{{ t.title }}</span></div>
            <svg class="close" viewBox="0 0 16 16"><path d="M1 1l14 14M15 1L1 15" /></svg>
          </div>
          <svg class="plus" viewBox="0 0 26 26"><path d="M13 1v24M1 13h24" /></svg>
          <svg class="chev" viewBox="0 0 26 16"><path d="M1 1l12 12L25 1" /></svg>
        </div>

        <div class="navbar">
          <svg class="nav-icon" viewBox="0 0 28 28"><path d="M27 14H2M13 3L2 14l11 11" /></svg>
          <svg class="nav-icon dim" viewBox="0 0 28 28"><path d="M1 14h25M15 3l11 11-11 11" /></svg>
          <svg class="nav-icon" viewBox="0 0 28 28"><path d="M26 17A12 12 0 1 1 23 6l3 3M26 1v9h-9" /></svg>
          <div class="urlbar">
            <svg class="shield" viewBox="0 0 30 32"><path d="M15 2l12 5c0 10-2 18-12 23C5 25 3 17 3 7z" /></svg>
            <svg class="lock" viewBox="0 0 24 32"><rect x="2" y="14" width="20" height="16" rx="3" /><path d="M6 14V8a6 6 0 0 1 12 0v6" /></svg>
            <span v-fit="998" class="fit">bb1d30f8-d852-4bae-abcd-b7c4521e3d85-00-x9tsn55inx51.spock.replit.dev</span>
            <svg class="star" viewBox="0 0 32 32"><path d="M16 2l4.300 9 9.700 1.300-7 6.800 1.700 9.800L16 24.200l-8.700 4.700L9 19.100 2 12.300 11.700 11z" /></svg>
          </div>
          <div class="nav-tools">
            <svg viewBox="0 0 32 32"><path d="M16 1v20M7 12l9 9 9-9M3 24v3a3 3 0 0 0 3 3h20a3 3 0 0 0 3-3v-3" /></svg>
            <svg viewBox="0 0 32 32"><path d="M4 28L17 14a7.500 7.500 0 0 1 9-11l-5 5 3 4 6-3a7.500 7.500 0 0 1-10 8L8 31q-3 1-4-3z" fill="#fbfbfe" stroke="none" /></svg>
            <svg viewBox="0 0 32 32"><circle cx="16" cy="16" r="14.500" /><circle cx="16" cy="12.500" r="5" fill="#fbfbfe" /><path d="M7 20h18q-3 6-9 6t-9-6z" fill="#fbfbfe" /><circle cx="31" cy="2" r="7" fill="#43a9f5" stroke="#2d6a98" /></svg>
            <svg viewBox="0 0 32 32"><path d="M3 10h7V5a4 4 0 0 1 8 0v5h6a3 3 0 0 1 3 3v15a3 3 0 0 1-3 3H6a3 3 0 0 1-3-3v-5h3a4 4 0 0 0 0-8H3z" /></svg>
            <svg viewBox="0 0 32 32"><path d="M1 6h24M1 15.500h24M1 25h24" /></svg>
          </div>
        </div>

        <div class="bookmarks">
          <div v-for="(b, i) in bookmarks" :key="i" class="bookmark" :style="{ width: b.w + 'px' }">
            <svg viewBox="0 0 32 32" v-html="b.icon" /><span v-fit="b.tw" class="fit">{{ b.t }}</span>
          </div>
          <svg class="more" viewBox="0 0 26 26"><path d="M2 2l10 11L2 24M14 2l10 11-10 11" /></svg>
          <div class="bookmark other"><svg viewBox="0 0 32 32" v-html="folder" /><span v-fit="181" class="fit">Other Bookmarks</span></div>
        </div>

        <div class="banner">
          <span v-fit="1030" class="fit">This is a temporary development preview, and these links are not for public use.</span>
          <a v-fit="215" class="fit">Deploy your app</a>
          <span v-fit="498" class="fit">for secure sharing or use an invite link.</span>
          <svg viewBox="0 0 20 20"><path d="M1 1l18 18M19 1L1 19" /></svg>
        </div>

        <div class="topbar">
          <svg class="brand" viewBox="0 0 93 104" v-html="sandwichLogo" />
          <h1 v-fit="396" class="fit">The Sandwich Project</h1>
          <div class="top-actions">
            <svg class="line big" viewBox="0 0 24 24" v-html="line.message" />
            <svg class="line big cog" viewBox="0 0 24 24" v-html="line.userCog" />
            <svg class="line" viewBox="0 0 24 24" v-html="line.logout" />
            <span v-fit="98" class="fit">Logout</span>
          </div>
        </div>

        <div class="body">
          <nav class="sidebar">
            <template v-for="(g, gi) in nav" :key="gi">
              <div v-if="g.heading" class="group"><i /><span v-fit="g.w" class="fit">{{ g.heading }}</span></div>
              <div v-for="(it, ii) in g.items" :key="ii" class="nav-item" :class="{ active: it.active }">
                <svg class="line" viewBox="0 0 24 24" v-html="line[it.icon]" /><span v-fit="it.w" class="fit">{{ it.label }}</span>
              </div>
            </template>
          </nav>

          <main class="main">
            <div class="actions">
              <button class="btn back">
                <svg viewBox="0 0 24 24"><path d="M23 12H2M10 4l-8 8 8 8" /></svg>
                <span v-fit="245" class="fit">Back to Meetings</span>
              </button>
              <button class="btn danger"><svg class="line" viewBox="0 0 24 24" v-html="line.trash" /><span v-fit="211" class="fit">Delete Minutes</span></button>
            </div>

            <article class="card">
              <h2><svg class="line big" viewBox="0 0 24 24" v-html="line.file" /><span v-fit="740" class="fit">Core Team Meeting 02/12/2024</span></h2>
              <div class="meta">
                <span v-fit="352" class="fit">Meeting Date: 2/11/2024</span>
                <button class="btn dl"><svg class="line" viewBox="0 0 24 24" v-html="line.download" /><span v-fit="198" class="fit">Download File</span></button>
              </div>
              <h3><span v-fit="504" class="fit">Meeting Minutes Document</span></h3>
              <div class="viewer">
                <div class="viewer-head">
                  <svg class="line big blue" viewBox="0 0 24 24" v-html="line.file" />
                  <span v-fit="719" class="fit fname">20240212_TSP Meeting Agenda &amp; Notes.pdf</span>
                  <span v-fit="58" class="fit ftype">PDF</span>
                  <button class="btn dl"><svg class="line" viewBox="0 0 24 24" v-html="line.download" /><span v-fit="198" class="fit">Download File</span></button>
                </div>
                <div class="pdfbar">
                  <svg class="tool sidebar-toggle" viewBox="0 0 32 32"><rect x="1" y="4" width="30" height="24" rx="3" class="s" /><path d="M14 4v24M5 10h4M5 15h4M5 20h4" class="s" /></svg>
                  <svg class="tool find" viewBox="0 0 32 32"><circle cx="13" cy="13" r="9.500" class="s" /><path d="M20 20l9 9" class="s" /></svg>
                  <svg class="tool up" viewBox="0 0 32 32"><path d="M4 21l12-11 12 11" class="s" /></svg>
                  <i class="vsep" />
                  <svg class="tool down" viewBox="0 0 32 32"><path d="M4 11l12 11 12-11" class="s" /></svg>
                  <div class="page-no">1</div>
                  <span v-fit="44" class="fit of">of 2</span>
                  <svg class="tool minus" viewBox="0 0 32 32"><path d="M3 17h26" class="s" /></svg>
                  <i class="vsep" />
                  <svg class="tool add" viewBox="0 0 32 32"><path d="M3 16h26M16 3v26" class="s" /></svg>
                  <div class="zoom"><span v-fit="186" class="fit">Automatic Zoom</span><svg viewBox="0 0 20 14"><path d="M2 2l8 8 8-8" /></svg></div>
                  <div class="pdf-right">
                    <div v-for="(t, i) in pdfTools" :key="i" class="cell" :style="{ width: t.w + 'px' }">
                      <svg v-if="t.svg" class="tool" viewBox="0 0 32 32" v-html="t.svg" /><i v-else class="vsep" />
                    </div>
                  </div>
                </div>
                <div class="pdfbody">
                  <div class="page">
                    <div class="page-head">
                      <h4><span v-fit="831" class="fit">MEETING AGENDA &amp; NOTES</span></h4>
                      <div class="logo">
                        <div class="logo-top"><span v-fit="37" class="fit the">THE</span><svg viewBox="0 0 93 104" v-html="sandwichLogo" /></div>
                        <span v-fit="216" class="fit sand">SANDWICH</span>
                        <span v-fit="157" class="fit proj">PROJECT</span>
                      </div>
                    </div>
                    <div class="table">
                      <div class="row first"><span v-fit="586" class="fit">TSP Leadership Meeting</span></div>
                      <div class="row second"><span v-fit="364" class="fit">April 8, 2024; 8 pm</span></div>
                    </div>
                    <div class="attendees">
                      <div><span v-fit="189" class="fit">Attendees:</span></div>
                      <div v-for="(a, i) in attendees" :key="i" class="person"><b>-</b><span v-fit="a.w" class="fit">{{ a.n }}</span></div>
                    </div>
                  </div>
                </div>
              </div>
            </article>
          </main>
        </div>
        <div class="shade" />
      </section>

      <footer class="dock">
        <div v-for="(d, i) in dock" :key="i" class="dock-item" :style="{ width: (d.w ?? 66) + 'px', marginLeft: (d.gap ?? (i ? 19.1 : 0)) + 'px' }">
          <i v-if="d.sep" class="dock-sep" />
          <svg v-else :width="d.w ?? 66" height="66" :viewBox="`0 0 ${d.w ?? 66} 66`" v-html="d.svg" />
          <span v-if="d.badge" class="badge" :class="{ wide: d.badge.length > 1 }">{{ d.badge }}</span>
          <i v-if="d.dot" class="dot" />
        </div>
      </footer>
    </div>
  </div>
</template>

<style>
body { overflow: hidden; background: #000; }
.s { fill: none; stroke: #c9c9cb; stroke-width: 2.4; }
.f { fill: #c9c9cb; }
</style>

<style scoped>
* { box-sizing: border-box; }
.screen { width: 3456px; height: 2234px; display: flex; flex-direction: column; overflow: hidden; font-family: Inter, sans-serif; color: #fff; }
svg { display: block; flex: none; overflow: visible; }
i { display: block; flex: none; }
.fit { display: inline-block; flex: none; white-space: nowrap; }
h1, h2, h3, h4 { margin: 0; }

.menubar { height: 74px; flex: none; display: flex; align-items: center; padding: 0 33px 1px 38px; font-size: 25px; font-weight: 500; background: linear-gradient(90deg, #47453a, #43463c 30%, #47483a 60%, #484838 75%, #3d4034 90%, #3a3c32); }
.apple { width: 32px; height: 32px; fill: #fff; margin-right: 38px; }
.app-name { font-weight: 700; }
.status { margin-left: auto; display: flex; align-items: center; color: #f0f0ec; }
.status-item { flex: none; filter: drop-shadow(0 3px 3px rgba(0, 0, 0, .25)); }
.battery-text { font-size: 22px; }
.date { margin-left: 32px; }
.time { margin-left: 19px; }

.desktop { position: relative; flex: 1; display: flex; flex-direction: column; align-items: center; background: radial-gradient(ellipse 60px 40px at 20px 2120px, #35502a, transparent), linear-gradient(90deg, #0f1a12 0, #1a2b1c 12%, #101a17 28%, #1b1d18 42%, #33231a 52%, #1c2a1e 60%, #2b3324 74%, #2a1e16 84%, #4f3219 91%, #141414 92%); }
.sticky { position: absolute; left: 3180px; top: 2000px; width: 276px; height: 160px; background: #f3eb9b; color: #111; font: bold 23px "Liberation Sans", sans-serif; overflow: hidden; }
.sticky-line { position: absolute; white-space: nowrap; }
.sticky-line.one { left: 210px; top: 66px; }
.sticky-line.two { left: 22px; top: 149px; }

.window { position: relative; flex: none; width: 3456px; height: 2034px; margin-top: 2px; border-radius: 22px 22px 24px 24px; overflow: hidden; display: flex; flex-direction: column; background: #2b2a33; box-shadow: 0 10px 30px 8px #000; }
.window::after { content: ""; position: absolute; inset: 0; border-radius: inherit; border: 2px solid rgba(255, 255, 255, .25); border-top-color: rgba(255, 255, 255, .35); border-bottom: 0; pointer-events: none; clip-path: inset(0 0 1700px 0); }
.tabstrip { height: 88px; flex: none; display: flex; align-items: center; background: #1c1b22; font-size: 22px; }
.window-controls { display: flex; align-items: center; width: 298px; height: 88px; padding-left: 26px; gap: 16px; border-right: 2px solid #48474f; margin-right: 8px; flex: none; }
.light { width: 24px; height: 24px; border-radius: 50%; }
.red { background: #ec6a5e; }
.yellow { background: #f4bf4f; }
.green { background: #61c554; }
.view { width: 36px; height: 34px; margin-left: 88px; fill: none; stroke: #fbfbfe; stroke-width: 2.8; }
.view rect { fill: #fbfbfe; stroke: none; }
.tab { width: 356px; height: 72px; flex: none; margin-right: 8.3px; padding-left: 17px; border-radius: 8px; display: flex; align-items: center; color: #b9b9c0; }
.tab.active { background: #54525e; color: #fff; box-shadow: 0 1px 4px rgba(0, 0, 0, .5); }
.favicon { width: 32px; height: 32px; margin-right: 10px; }
.tab-title { flex: 1; min-width: 0; overflow: hidden; line-height: 32px; }
.tab-title.faded { mask-image: linear-gradient(90deg, #000 89%, transparent 101%); }
.tab-title .fit { letter-spacing: .15px; }
.close { width: 16px; height: 16px; margin: 0 23px 0 1px; fill: none; stroke: #fbfbfe; stroke-width: 2.2; }
.plus { width: 26px; height: 26px; margin-left: 23px; fill: none; stroke: #fbfbfe; stroke-width: 2.2; }
.chev { width: 26px; height: 16px; margin-left: 54px; fill: none; stroke: #fbfbfe; stroke-width: 2.2; }

.navbar { height: 80px; flex: none; display: flex; align-items: center; padding-left: 34px; }
.navbar svg { fill: none; stroke: #fbfbfe; stroke-width: 2.5; stroke-linejoin: round; stroke-linecap: round; }
.nav-icon { width: 28px; height: 28px; margin-right: 44px; }
.navbar .dim { stroke: #78777f; }
.urlbar { width: 2388px; height: 64px; margin-left: 212px; border-radius: 8px; background: #1c1b22; display: flex; align-items: center; padding: 0 16px; font-size: 27px; flex: none; }
.shield { width: 30px; height: 32px; margin-right: 30px; }
.lock { width: 24px; height: 32px; margin-right: 25px; }
.star { width: 32px; height: 32px; margin-left: auto; }
.nav-tools { display: flex; margin-left: 253px; gap: 41px; }
.nav-tools svg { width: 32px; height: 32px; }

.bookmarks { height: 57px; flex: none; display: flex; align-items: center; padding-left: 24px; font-size: 22px; }
.bookmark { display: flex; align-items: center; gap: 9px; flex: none; overflow: hidden; }
.bookmark svg { width: 32px; height: 32px; }
.more { width: 26px; height: 26px; margin-left: 14px; fill: none; stroke: #fbfbfe; stroke-width: 2.4; }
.other { margin-left: 28px; }

.banner { height: 90px; flex: none; position: relative; display: flex; align-items: center; padding: 0 50px 0 32px; font-size: 27.5px; background: #19407e; border-bottom: 3px solid #2b5290; box-shadow: 0 3px 14px rgba(0, 0, 0, .22); z-index: 1; }
.banner a { margin: 0 9px 0 8px; font-weight: 500; text-decoration: underline; text-underline-offset: 4px; text-decoration-thickness: 2px; }
.banner svg { width: 20px; height: 20px; margin-left: auto; fill: none; stroke: #c4d0e2; stroke-width: 2.2; }

.topbar { height: 137px; flex: none; display: flex; align-items: center; padding: 0 81px 0 84px; background: #fff; border-bottom: 2px solid #e2e8f0; font-family: Roboto, sans-serif; }
.brand { width: 48px; height: 52px; margin-right: 30px; }
.topbar h1 { font-size: 40.5px; font-weight: 600; color: #0f172a; }
.line { width: 36px; height: 36px; fill: none; stroke: currentColor; stroke-width: 2; stroke-linecap: round; stroke-linejoin: round; }
.line.big { width: 45px; height: 45px; }
.top-actions { margin-left: auto; display: flex; align-items: center; color: #475569; font-size: 31.5px; }
.top-actions .cog { margin: 0 81px 0 72px; }
.top-actions .fit { margin-left: 18px; }

.body { flex: 1; min-height: 0; display: flex; background: #f8fafc; font-family: Roboto, sans-serif; }
.sidebar { width: 576px; flex: none; padding: 36px 36px 0 36px; display: flex; flex-direction: column; gap: 9px; background: #fff; border-right: 2px solid #e2e8f0; overflow: hidden; }
.nav-item { height: 90px; flex: none; display: flex; align-items: center; padding-left: 27px; gap: 45px; border-radius: 12px; font-size: 31.5px; font-weight: 500; color: #334155; }
.nav-item.active { background: #3a86b9; color: #fff; box-shadow: 0 2px 4px rgba(0, 0, 0, .08); }
.group { height: 90px; flex: none; display: flex; align-items: center; padding-top: 19px; gap: 27px; color: #64748b; font-size: 27px; font-weight: 500; }
.group i { flex: 1; height: 2px; background: #e2e8f0; }

.main { flex: 1; padding: 54px 54px 0; overflow: hidden; color: #625b58; font-size: 31.5px; display: flex; flex-direction: column; }
.actions { display: flex; justify-content: space-between; height: 90px; flex: none; }
.btn { font: 500 31.5px Roboto, sans-serif; color: #625b58; background: #fff; border: 2px solid #f3f4f5; border-radius: 14px; display: flex; align-items: center; padding: 0; }
.back { width: 357px; padding-left: 37px; gap: 9px; }
.back svg { width: 25px; height: 25px; fill: none; stroke: currentColor; stroke-width: 2.4; }
.danger { width: 356px; background: #dc5148; color: #fff; border: 0; border-radius: 12px; padding-left: 36px; gap: 36px; }
.card { flex: 1; min-height: 0; margin-top: 55px; padding: 54px; border: 2px solid #e4e6ea; border-bottom: 0; border-radius: 18px 18px 0 0; background: #fff; display: flex; flex-direction: column; }
.card h2 { display: flex; align-items: center; gap: 18px; height: 54px; flex: none; font-size: 54px; line-height: 54px; font-weight: 600; }
.meta { display: flex; align-items: center; justify-content: space-between; margin-top: 14px; }
.dl { width: 328px; height: 80px; padding-left: 27px; gap: 36px; flex: none; }
.card h3 { height: 54px; flex: none; margin: 58px 0 42px; line-height: 54px; font-size: 40.5px; font-weight: 600; color: #0f172a; }
.viewer { flex: none; height: 1100px; border: 2px solid #e2e5e9; border-radius: 18px 18px 0 0; overflow: hidden; display: flex; flex-direction: column; }
.viewer-head { height: 154px; flex: none; display: flex; align-items: center; padding: 0 37px 0 35px; background: #f8fafc; border-bottom: 2px solid #e2e5e9; }
.blue { color: #2f5fe8; }
.fname { font-size: 36px; font-weight: 500; margin-left: 19px; }
.ftype { margin-left: 18px; color: #78716c; }
.viewer-head .dl { margin-left: auto; }
.pdfbar { height: 66px; flex: none; display: flex; align-items: center; background: #38383d; border-bottom: 2px solid #0c0c0d; font: 24px Inter, sans-serif; color: #f9f9fa; }
.tool { width: 32px; height: 32px; }
.sidebar-toggle { margin-left: 14px; }
.find { margin-left: 88px; }
.up { margin-left: 26px; opacity: .45; }
.vsep { width: 2px; height: 44px; background: #26262a; }
.pdfbar > .vsep { margin-left: 15px; }
.down { margin-left: 14px; }
.page-no { margin-left: 14px; width: 111px; height: 46px; border: 2px solid #6d6d72; border-radius: 3px; background: #414146; text-align: right; line-height: 42px; padding-right: 14px; }
.of { margin-left: 12px; }
.minus { margin-left: 668px; }
.add { margin-left: 13px; }
.zoom { width: 280px; height: 56px; margin-left: 15px; background: #4a4a4f; display: flex; align-items: center; padding: 0 15px 0 12px; font-weight: 500; font-size: 23px; }
.zoom svg { width: 20px; height: 14px; margin-left: auto; fill: none; stroke: #f9f9fa; stroke-width: 2.4; }
.pdf-right { margin-left: auto; display: flex; }
.cell { display: flex; align-items: center; justify-content: center; height: 56px; }
.pdfbody { flex: 1; background: #2a2a2e; padding: 18px 0 0 308px; }
.page { width: 2040px; height: 900px; background: #fff; color: #000; font-family: "Liberation Sans", Arial, sans-serif; }
.page-head { height: 225px; display: flex; justify-content: space-between; padding-left: 224px; padding-right: 198px; }
.page-head h4 { padding-top: 139px; font-size: 61.500px; line-height: 60px; }
.logo { width: 218px; padding-top: 25px; display: flex; flex-direction: column; align-items: flex-start; font-family: Lato, sans-serif; color: #69696b; font-weight: 600; }
.logo-top { display: flex; align-items: flex-end; gap: 25px; height: 106px; }
.logo-top svg { width: 94px; height: 104px; margin-bottom: 2px; }
.the { font-size: 20px; line-height: 18px; margin-bottom: 0; }
.sand { font-size: 41px; line-height: 38px; }
.proj { font-size: 37px; line-height: 36px; margin-left: 30px; }
.table { width: 1559px; margin-left: 241px; border: 2px solid #a9a9a9; }
.row { height: 121px; display: flex; align-items: center; padding-left: 16px; }
.first { font-size: 55px; border-bottom: 2px solid #a9a9a9; }
.second { font-size: 44.500px; }
.attendees { margin: -1px 0 0 240px; font-size: 37px; line-height: 42.300px; font-weight: bold; }
.attendees > div { height: 42.300px; }
.person { display: flex; padding-left: 60px; }
.person b { width: 60px; }
.shade { position: absolute; left: 0; right: 0; bottom: 0; height: 110px; background: linear-gradient(transparent, rgba(0, 0, 0, .1)); }

.dock { position: relative; flex: none; margin-top: 10px; width: 3320px; height: 104px; border: 2px solid rgba(255, 255, 255, .2); border-radius: 30px; display: flex; padding: 14px 0 0 13px; background: linear-gradient(90deg, #1c241f 0, #202321 25%, #2a211a 55%, #1f2620 65%, #24291f 82%, #38271a 88%, #46422a 92%, #666136 96%, #797340 100%); }
.dock-item { position: relative; height: 66px; flex: none; }
.dock-sep { width: 2px; height: 76px; margin-top: -2px; background: #6c6c66; }
.dot { position: absolute; left: 29px; top: 76px; width: 8px; height: 8px; border-radius: 50%; background: #a3a7a2; }
.badge { position: absolute; right: -9px; top: -9px; width: 32px; height: 32px; border-radius: 16px; background: #e2493c; font-size: 19px; line-height: 32px; text-align: center; }
.badge.wide { width: 48px; font-size: 16.500px; }
</style>
